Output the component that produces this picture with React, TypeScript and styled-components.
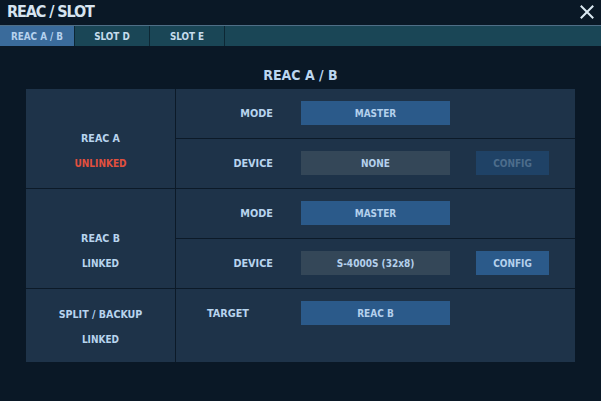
import React from "react";
import styled, { createGlobalStyle } from "styled-components";

const Global = createGlobalStyle`
  html, body { margin: 0; padding: 0; background: #0a1826; }
  body { font-family: "DejaVu Sans Condensed", "DejaVu Sans", sans-serif; font-weight: bold; }
  * { box-sizing: border-box; }
`;

const Window = styled.div`
  width: 601px;
  height: 401px;
  background: #0a1826;
  display: flex;
  flex-direction: column;
  overflow: hidden;
`;

const TitleBar = styled.div`
  height: 26px;
  display: flex;
  align-items: center;
  justify-content: space-between;
  padding: 0 6px 1px 7px;
  border-bottom: 1px solid #4f6e86;
`;

const Title = styled.div`
  color: #d6e4f0;
  font-size: 16px;
  letter-spacing: -1.1px;
  line-height: 1;
`;

const Close = styled.button`
  width: 16px;
  height: 16px;
  padding: 0;
  border: none;
  background: transparent;
  display: flex;
  align-items: center;
  justify-content: center;
`;

const TabBar = styled.div`
  height: 20px;
  background: #1a4656;
  display: flex;
`;

const Tab = styled.div<{ $active?: boolean }>`
  width: 75px;
  border-right: 1px solid #0d2734;
  background: ${(p) => (p.$active ? "#3a6b9b" : "transparent")};
  color: ${(p) => (p.$active ? "#b6d2ee" : "#c6dcec")};
  font-size: 9.8px;
  display: flex;
  align-items: center;
  justify-content: center;
`;

const Heading = styled.div`
  color: #bcd6f0;
  font-size: 14px;
  text-align: center;
  margin-top: 21px;
  height: 22px;
  line-height: 17px;
`;

const Table = styled.div`
  margin-left: 26px;
  width: 549px;
  display: grid;
  grid-template-columns: 149px 1fr;
  gap: 1px;
  background: #0c1a28;
`;

const NameCell = styled.div<{ $h: number; $shift: number }>`
  height: ${(p) => p.$h}px;
  background: #1e3349;
  display: flex;
  flex-direction: column;
  align-items: center;
  justify-content: center;
  gap: 12px;
  padding-top: ${(p) => p.$shift}px;
  color: #b8d4ee;
`;

const Name = styled.div`
  font-size: 10.6px;
  line-height: 14px;
`;

const Status = styled.div<{ $bad?: boolean }>`
  font-size: 10px;
  line-height: 14px;
  color: ${(p) => (p.$bad ? "#e2503e" : "#b8d4ee")};
`;

const SubRows = styled.div`
  display: flex;
  flex-direction: column;
  gap: 1px;
`;

const SubRow = styled.div<{ $h: number }>`
  height: ${(p) => p.$h}px;
  background: #1e3349;
  display: grid;
  grid-template-columns: 125px 149px 26px 73px;
  align-items: start;
  padding-top: 12px;
`;

const Label = styled.div<{ $pr: number }>`
  height: 24px;
  display: flex;
  align-items: center;
  justify-content: flex-end;
  padding-right: ${(p) => p.$pr}px;
  color: #b8d4ee;
  font-size: 10.8px;
`;

const Field = styled.div<{ $kind: "blue" | "gray" | "off" }>`
  height: 24px;
  display: flex;
  align-items: center;
  justify-content: center;
  font-size: 10px;
  background: ${(p) =>
    p.$kind === "blue" ? "#2b5a8a" : p.$kind === "gray" ? "#344758" : "#1f4266"};
  color: ${(p) => (p.$kind === "off" ? "#4d6d8c" : "#b4d0ec")};
`;

const Spacer = styled.div``;

type Sub = { label: string; value: string; gray?: boolean; config?: "on" | "off"; pr?: number };

function SubRowView({ s, h }: { s: Sub; h: number }) {
  return (
    <SubRow $h={h}>
      <Label $pr={s.pr ?? 28}>{s.label}</Label>
      <Field $kind={s.gray ? "gray" : "blue"}>{s.value}</Field>
      {s.config && (
        <>
          <Spacer />
          <Field $kind={s.config === "on" ? "blue" : "off"}>CONFIG</Field>
        </>
      )}
    </SubRow>
  );
}

const groups: {
  name: string;
  status: string;
  bad?: boolean;
  shift: number;
  subs: Sub[];
  h: number[];
}[] = [
  {
    name: "REAC A",
    status: "UNLINKED",
    bad: true,
    shift: 25,
    h: [49, 49],
    subs: [
      { label: "MODE", value: "MASTER" },
      { label: "DEVICE", value: "NONE", gray: true, config: "off" },
    ],
  },
  {
    name: "REAC B",
    status: "LINKED",
    shift: 25,
    h: [49, 49],
    subs: [
      { label: "MODE", value: "MASTER" },
      { label: "DEVICE", value: "S-4000S (32x8)", gray: true, config: "on" },
    ],
  },
  {
    name: "SPLIT / BACKUP",
    status: "LINKED",
    shift: 2,
    h: [73],
    subs: [{ label: "TARGET", value: "REAC B", pr: 52 }],
  },
];

export default function App() {
  return (
    <Window>
      <Global />
      <TitleBar>
        <Title>REAC / SLOT</Title>
        <Close aria-label="close">
          <svg width="14" height="14" viewBox="0 0 14 14">
            <path d="M1.5 1.5 L12.5 12.5 M12.5 1.5 L1.5 12.5" stroke="#dbe9f2" strokeWidth="2" strokeLinecap="square" />
          </svg>
        </Close>
      </TitleBar>
      <TabBar>
        <Tab $active>REAC A / B</Tab>
        <Tab>SLOT D</Tab>
        <Tab>SLOT E</Tab>
      </TabBar>
      <Heading>REAC A / B</Heading>
      <Table>
        {groups.map((g) => (
          <React.Fragment key={g.name}>
            <NameCell $h={g.h.reduce((a, b) => a + b, 0) + g.h.length - 1} $shift={g.shift}>
              <Name>{g.name}</Name>
              <Status $bad={g.bad}>{g.status}</Status>
            </NameCell>
            <SubRows>
              {g.subs.map((s, i) => (
                <SubRowView key={s.label} s={s} h={g.h[i]} />
              ))}
            </SubRows>
          </React.Fragment>
        ))}
      </Table>
    </Window>
  );
}
